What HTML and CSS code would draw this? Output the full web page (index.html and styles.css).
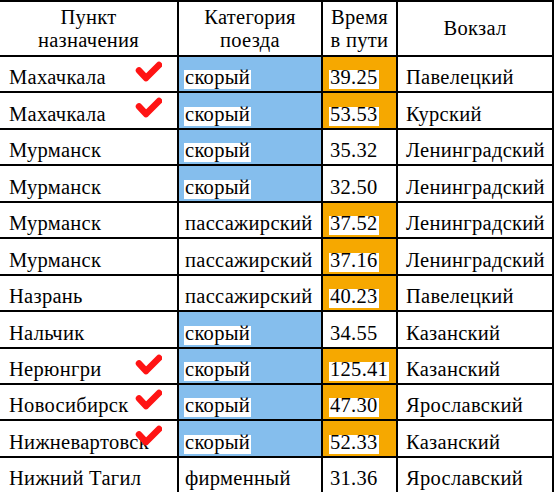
FILE: index.html
```html
<!DOCTYPE html>
<html lang="ru">
<head>
<meta charset="utf-8">
<title>Поезда</title>
<link rel="stylesheet" href="styles.css">
</head>
<body>
<table class="trains">
  <colgroup>
    <col class="c1"><col class="c2"><col class="c3"><col class="c4">
  </colgroup>
  <thead>
    <tr>
      <th>Пункт<br>назначения</th>
      <th>Категория<br>поезда</th>
      <th class="time-h">Время<br>в пути</th>
      <th>Вокзал</th>
    </tr>
  </thead>
  <tbody>
    <tr>
      <td class="city">Махачкала<span class="check"><svg viewBox="0 0 28 22" width="28" height="22"><path d="M5 10.5 L12 18 L25 5" /></svg></span></td>
      <td class="cat blue"><span class="hl">скорый</span></td>
      <td class="time orange"><span class="hl">39.25</span></td>
      <td class="station">Павелецкий</td>
    </tr>
    <tr>
      <td class="city">Махачкала<span class="check"><svg viewBox="0 0 28 22" width="28" height="22"><path d="M5 10.5 L12 18 L25 5" /></svg></span></td>
      <td class="cat blue"><span class="hl">скорый</span></td>
      <td class="time orange"><span class="hl">53.53</span></td>
      <td class="station">Курский</td>
    </tr>
    <tr>
      <td class="city">Мурманск</td>
      <td class="cat blue"><span class="hl">скорый</span></td>
      <td class="time">35.32</td>
      <td class="station">Ленинградский</td>
    </tr>
    <tr>
      <td class="city">Мурманск</td>
      <td class="cat blue"><span class="hl">скорый</span></td>
      <td class="time">32.50</td>
      <td class="station">Ленинградский</td>
    </tr>
    <tr>
      <td class="city">Мурманск</td>
      <td class="cat">пассажирский</td>
      <td class="time orange"><span class="hl">37.52</span></td>
      <td class="station">Ленинградский</td>
    </tr>
    <tr>
      <td class="city">Мурманск</td>
      <td class="cat">пассажирский</td>
      <td class="time orange"><span class="hl">37.16</span></td>
      <td class="station">Ленинградский</td>
    </tr>
    <tr>
      <td class="city">Назрань</td>
      <td class="cat">пассажирский</td>
      <td class="time orange"><span class="hl">40.23</span></td>
      <td class="station">Павелецкий</td>
    </tr>
    <tr>
      <td class="city">Нальчик</td>
      <td class="cat blue"><span class="hl">скорый</span></td>
      <td class="time">34.55</td>
      <td class="station">Казанский</td>
    </tr>
    <tr>
      <td class="city">Нерюнгри<span class="check low"><svg viewBox="0 0 28 22" width="28" height="22"><path d="M5 10.5 L12 18 L25 5" /></svg></span></td>
      <td class="cat blue"><span class="hl">скорый</span></td>
      <td class="time orange"><span class="hl">125.41</span></td>
      <td class="station">Казанский</td>
    </tr>
    <tr>
      <td class="city">Новосибирск<span class="check"><svg viewBox="0 0 28 22" width="28" height="22"><path d="M5 10.5 L12 18 L25 5" /></svg></span></td>
      <td class="cat blue"><span class="hl">скорый</span></td>
      <td class="time orange"><span class="hl">47.30</span></td>
      <td class="station">Ярославский</td>
    </tr>
    <tr>
      <td class="city">Нижневартовск<span class="check"><svg viewBox="0 0 28 22" width="28" height="22"><path d="M5 10.5 L12 18 L25 5" /></svg></span></td>
      <td class="cat blue"><span class="hl">скорый</span></td>
      <td class="time orange"><span class="hl">52.33</span></td>
      <td class="station">Казанский</td>
    </tr>
    <tr>
      <td class="city">Нижний Тагил</td>
      <td class="cat">фирменный</td>
      <td class="time">31.36</td>
      <td class="station">Ярославский</td>
    </tr>
  </tbody>
</table>
</body>
</html>
```
FILE: styles.css
```css
html, body {
  margin: 0;
  padding: 0;
  background: #ffffff;
}

body {
  font-family: "Liberation Serif", "DejaVu Serif", serif;
  font-size: 20.5px;
  letter-spacing: 0.3px;
  color: #000000;
  overflow: hidden;
}

.trains {
  border-collapse: collapse;
  table-layout: fixed;
  width: 553px;
}

.c1 { width: 178px; }
.c2 { width: 144px; }
.c3 { width: 75px; }
.c4 { width: 156px; }

.trains th,
.trains td {
  border: 2px solid #000000;
  padding: 0;
  white-space: nowrap;
  line-height: 23px;
}

.trains th:first-child,
.trains td:first-child {
  border-left: 0;
}

.trains thead tr {
  height: 55px;
}

.trains th {
  font-weight: normal;
  text-align: center;
  vertical-align: middle;
}

.trains tbody tr {
  height: 36.45px;
}

.trains td {
  vertical-align: bottom;
  padding-bottom: 2px;
  text-align: left;
}

.city {
  position: relative;
  padding-left: 9px !important;
  overflow: visible;
}

.cat {
  padding-left: 6px !important;
}

.time {
  padding-left: 7px !important;
}

.station {
  padding-left: 8px !important;
}

.blue {
  background: #85beed;
}

.orange {
  background: #f6a800;
}

.hl {
  display: inline-block;
  background: #ffffff;
  line-height: 14px;
  padding: 0 1px 5px 1px;
  margin-left: -1px;
}

.check {
  position: absolute;
  left: 134px;
  top: 3px;
  width: 28px;
  height: 22px;
}

.check.low {
  top: 4px;
}

.check svg {
  display: block;
}

.check path {
  fill: none;
  stroke: #ff1414;
  stroke-width: 6.5;
  stroke-linecap: round;
  stroke-linejoin: round;
}
```
